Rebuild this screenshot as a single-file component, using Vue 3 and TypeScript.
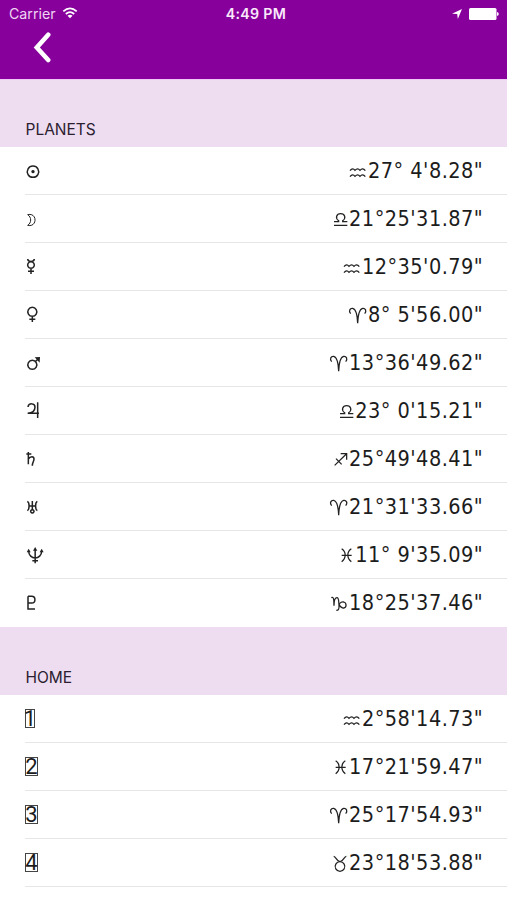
<script setup lang="ts">
type Sign = 'aquarius' | 'libra' | 'aries' | 'sagittarius' | 'pisces' | 'capricorn' | 'taurus'

interface Planet {
  name: string
  sign: Sign
  value: string
  path: string
  fill?: string
  thin?: boolean
}

interface House {
  number: number
  sign: Sign
  value: string
}

// Glyph outlines are drawn in thirds of a pixel on a row 144 units high.
const signs: Record<Sign, { width: number; path: string }> = {
  aquarius: { width: 50, path: 'M0 71 Q8 61 15 70 Q23 61 30 70 Q38 61 46 71 M0 89 Q8 79 15 88 Q23 79 30 88 Q38 79 46 89' },
  libra: { width: 43, path: 'M0 80 H14 V77 C3 70 7 56 20 56 C33 56 37 70 26 77 V80 H40 M0 91 H40' },
  aries: { width: 54, path: 'M5 68 C-2 60 3 51 11 52 C21 54 25 69 26 97 C27 69 31 54 41 52 C49 51 54 60 47 68' },
  sagittarius: { width: 43, path: 'M2 91 L37 57 M20 56 H38 V74 M6 71 L23 88' },
  pisces: { width: 40, path: 'M2 53 C16 62 16 82 2 92 M31 53 C17 62 17 82 31 92 M2 73 H32' },
  capricorn: { width: 50, path: 'M1 56 C8 52 9 62 9 80 C9 66 13 56 18 56 C24 56 23 68 24 79 C25 93 21 94 16 94 M24 80 C25 73 31 68 38 69 C47 71 48 86 38 87 C31 88 27 83 24 76' },
  taurus: { width: 46, path: 'M2 52 C9 52 11 68 21 68 C31 68 33 52 40 52 M21 68 A14.5 14.5 0 1 1 20.9 68' },
}

const planets: Planet[] = [
  { name: 'Sun', sign: 'aquarius', value: '27° 4\'8.28"', path: 'M99 57 A17 17 0 1 1 98.9 57', fill: 'M99 69 A5 5 0 1 1 98.9 69' },
  { name: 'Moon', sign: 'libra', value: '21°25\'31.87"', path: 'M83 59 C95 66 95 84 83 91 C112 98 113 52 83 59', thin: true },
  { name: 'Mercury', sign: 'aquarius', value: '12°35\'0.79"', path: 'M83 48 C84 58 102 58 103 48 M93 56 A10 10 0 1 1 92.9 56 M93 76 V93 M84 85 H102' },
  { name: 'Venus', sign: 'aries', value: '8° 5\'56.00"', path: 'M97 49 A13.5 13.5 0 1 1 96.9 49 M97 76 V93 M88 85 H106' },
  { name: 'Mars', sign: 'aries', value: '13°36\'49.62"', path: 'M97 64 A13.5 13.5 0 1 1 96.9 64 M106 68 L114 60', fill: 'M104 55 L120 54 L119 71 Z' },
  { name: 'Jupiter', sign: 'libra', value: '23° 0\'15.21"', path: 'M84 60 C86 47 105 48 105 60 C105 71 97 78 83 79 H117 M113 46 V93' },
  { name: 'Saturn', sign: 'sagittarius', value: '25°49\'48.41"', path: 'M79 57 H94 M85 51 V88 M85 72 C91 63 102 63 102 72 C102 80 97 82 97 92' },
  { name: 'Uranus', sign: 'aries', value: '21°31\'33.66"', path: 'M82 55 C89 58 89 80 82 83 M112 55 C105 58 105 80 112 83 M87 69 H107 M97 54 V80 M97 80 A5 5 0 1 1 96.9 80' },
  { name: 'Neptune', sign: 'pisces', value: '11° 9\'35.09"', path: 'M86 59 C86 88 125 88 125 59 M105.5 54 V97 M97 89 H114', fill: 'M80 64 L86 53 L92 64 Z M99 59 L105.5 48 L112 59 Z M119 64 L125 53 L131 64 Z' },
  { name: 'Pluto', sign: 'capricorn', value: '18°25\'37.46"', path: 'M84 52 V90 H105 M84 52 H95 C108 52 108 72 95 72 H84' },
]

const houses: House[] = [
  { number: 1, sign: 'aquarius', value: '2°58\'14.73"' },
  { number: 2, sign: 'pisces', value: '17°21\'59.47"' },
  { number: 3, sign: 'aries', value: '25°17\'54.93"' },
  { number: 4, sign: 'taurus', value: '23°18\'53.88"' },
]
</script>

<template>
  <main class="screen">
    <header class="top">
      <div class="status">
        <div class="carrier">
          <span>Carrier</span>
          <svg class="wifi" viewBox="0 0 16 12" width="16" height="12">
            <path d="M1.300 4.400 Q8 -1.700 14.700 4.400 M3.800 7 Q8 3.200 12.200 7" />
            <path class="solid" d="M5.500 8.700 Q8 6.800 10.500 8.700 L8 11.300 Z" />
          </svg>
        </div>
        <span class="time">4:49 PM</span>
        <div class="indicators">
          <svg viewBox="0 0 10 10" width="10" height="10"><path class="solid" d="M0 4.700 L10 0 L5.800 10 L5.200 5 Z" /></svg>
          <svg viewBox="0 0 30 12" width="30" height="12">
            <rect class="solid" x="0" y="0" width="27.500" height="12" rx="1.500" />
            <path class="solid" d="M28 4 Q29.800 4.500 29.800 6 Q29.800 7.500 28 8 Z" />
          </svg>
        </div>
      </div>
      <button class="back" aria-label="Back">
        <svg viewBox="0 0 18 31" width="18" height="31"><path d="M15.200 2.700 L3.800 15.500 L15.200 28" /></svg>
      </button>
    </header>

    <section>
      <h2>PLANETS</h2>
      <ul>
        <li v-for="planet in planets" :key="planet.name">
          <svg class="glyph" :class="{ thin: planet.thin }" viewBox="75 0 60 144" width="20" height="48">
            <path :d="planet.path" />
            <path v-if="planet.fill" class="dark" :d="planet.fill" />
          </svg>
          <div class="position">
            <svg class="glyph sign" :viewBox="`0 0 ${signs[planet.sign].width} 144`" :width="signs[planet.sign].width / 3" height="48">
              <path :d="signs[planet.sign].path" />
            </svg>
            <span>{{ planet.value }}</span>
          </div>
        </li>
      </ul>
    </section>

    <section>
      <h2>HOME</h2>
      <ul>
        <li v-for="house in houses" :key="house.number">
          <span class="house" :class="{ narrow: house.number === 1 }">{{ house.number }}</span>
          <div class="position">
            <svg class="glyph sign" :viewBox="`0 0 ${signs[house.sign].width} 144`" :width="signs[house.sign].width / 3" height="48">
              <path :d="signs[house.sign].path" />
            </svg>
            <span>{{ house.value }}</span>
          </div>
        </li>
      </ul>
    </section>
  </main>
</template>

<style>
body {
  margin: 0;
  background: #fff;
  overflow: hidden;
}
</style>

<style scoped>
.screen {
  width: 507px;
  height: 900px;
  overflow: hidden;
  background: #fff;
  color: #1c1c1c;
  font-family: Inter, "Liberation Sans", sans-serif;
}
.top {
  box-sizing: border-box;
  height: 79px;
  background: #87009c;
  color: #fff;
}
.status {
  display: grid;
  grid-template-columns: 1fr auto 1fr;
  align-items: center;
  height: 27px;
  padding: 0 8px 0 9px;
  font-size: 14px;
  line-height: 27px;
}
.carrier {
  display: flex;
  align-items: center;
  gap: 6px;
  font-size: 14.200px;
  color: #f0d5f3;
}
.time {
  margin-left: 4px;
  font-weight: 600;
  font-size: 14.200px;
  letter-spacing: 0.300px;
  color: #faeafb;
}
.indicators {
  display: flex;
  justify-content: flex-end;
  align-items: center;
  gap: 7px;
}
.wifi {
  fill: none;
  stroke: #fff;
  stroke-width: 1.800;
}
.carrier .wifi {
  margin-bottom: 1px;
}
.solid {
  fill: #fff;
  stroke: none;
}
.back {
  display: block;
  margin: 5px 0 0 33px;
  padding: 0;
  border: 0;
  background: none;
}
.back svg {
  display: block;
  fill: none;
  stroke: #fff;
  stroke-width: 4.600;
  stroke-linecap: round;
  stroke-linejoin: miter;
}
h2 {
  box-sizing: border-box;
  height: 68px;
  margin: 0;
  padding: 41px 0 0 25.500px;
  background: #eeddf0;
  color: #2b2030;
  font-size: 15.500px;
  line-height: 20px;
  font-weight: 400;
}
.top + section h2 {
  border-top: 1px solid #f0c8f5;
  padding-top: 40px;
}
ul {
  margin: 0;
  padding: 0;
  list-style: none;
}
li {
  box-sizing: border-box;
  display: flex;
  align-items: flex-start;
  justify-content: space-between;
  height: 48.040px;
  margin-left: 25px;
  padding-right: 24px;
  border-bottom: 1px solid #e6e6e8;
}
section:first-of-type li:last-child {
  border-bottom-color: transparent;
}
.glyph {
  display: block;
  flex: none;
  overflow: visible;
  fill: none;
  stroke: #222;
  stroke-width: 4.500;
}
.glyph.thin {
  stroke-width: 3;
}
.glyph.sign {
  margin-right: 1px;
  stroke-width: 3.800;
}
.dark {
  fill: #222;
  stroke: none;
}
.position {
  display: flex;
  height: 47px;
  margin-right: -0.200px;
  font-family: "DejaVu Sans Condensed", "DejaVu Sans", sans-serif;
  font-stretch: condensed;
  font-size: 21.500px;
  letter-spacing: 0.470px;
  line-height: 47px;
  white-space: pre;
}
.house {
  box-sizing: border-box;
  width: 13px;
  height: 19px;
  margin-top: 14px;
  border: 1px solid #444;
  font-family: Roboto, "Liberation Sans", sans-serif;
  font-size: 22px;
  line-height: 18px;
  display: flex;
  justify-content: center;
}
.house.narrow {
  width: 10px;
}
</style>
